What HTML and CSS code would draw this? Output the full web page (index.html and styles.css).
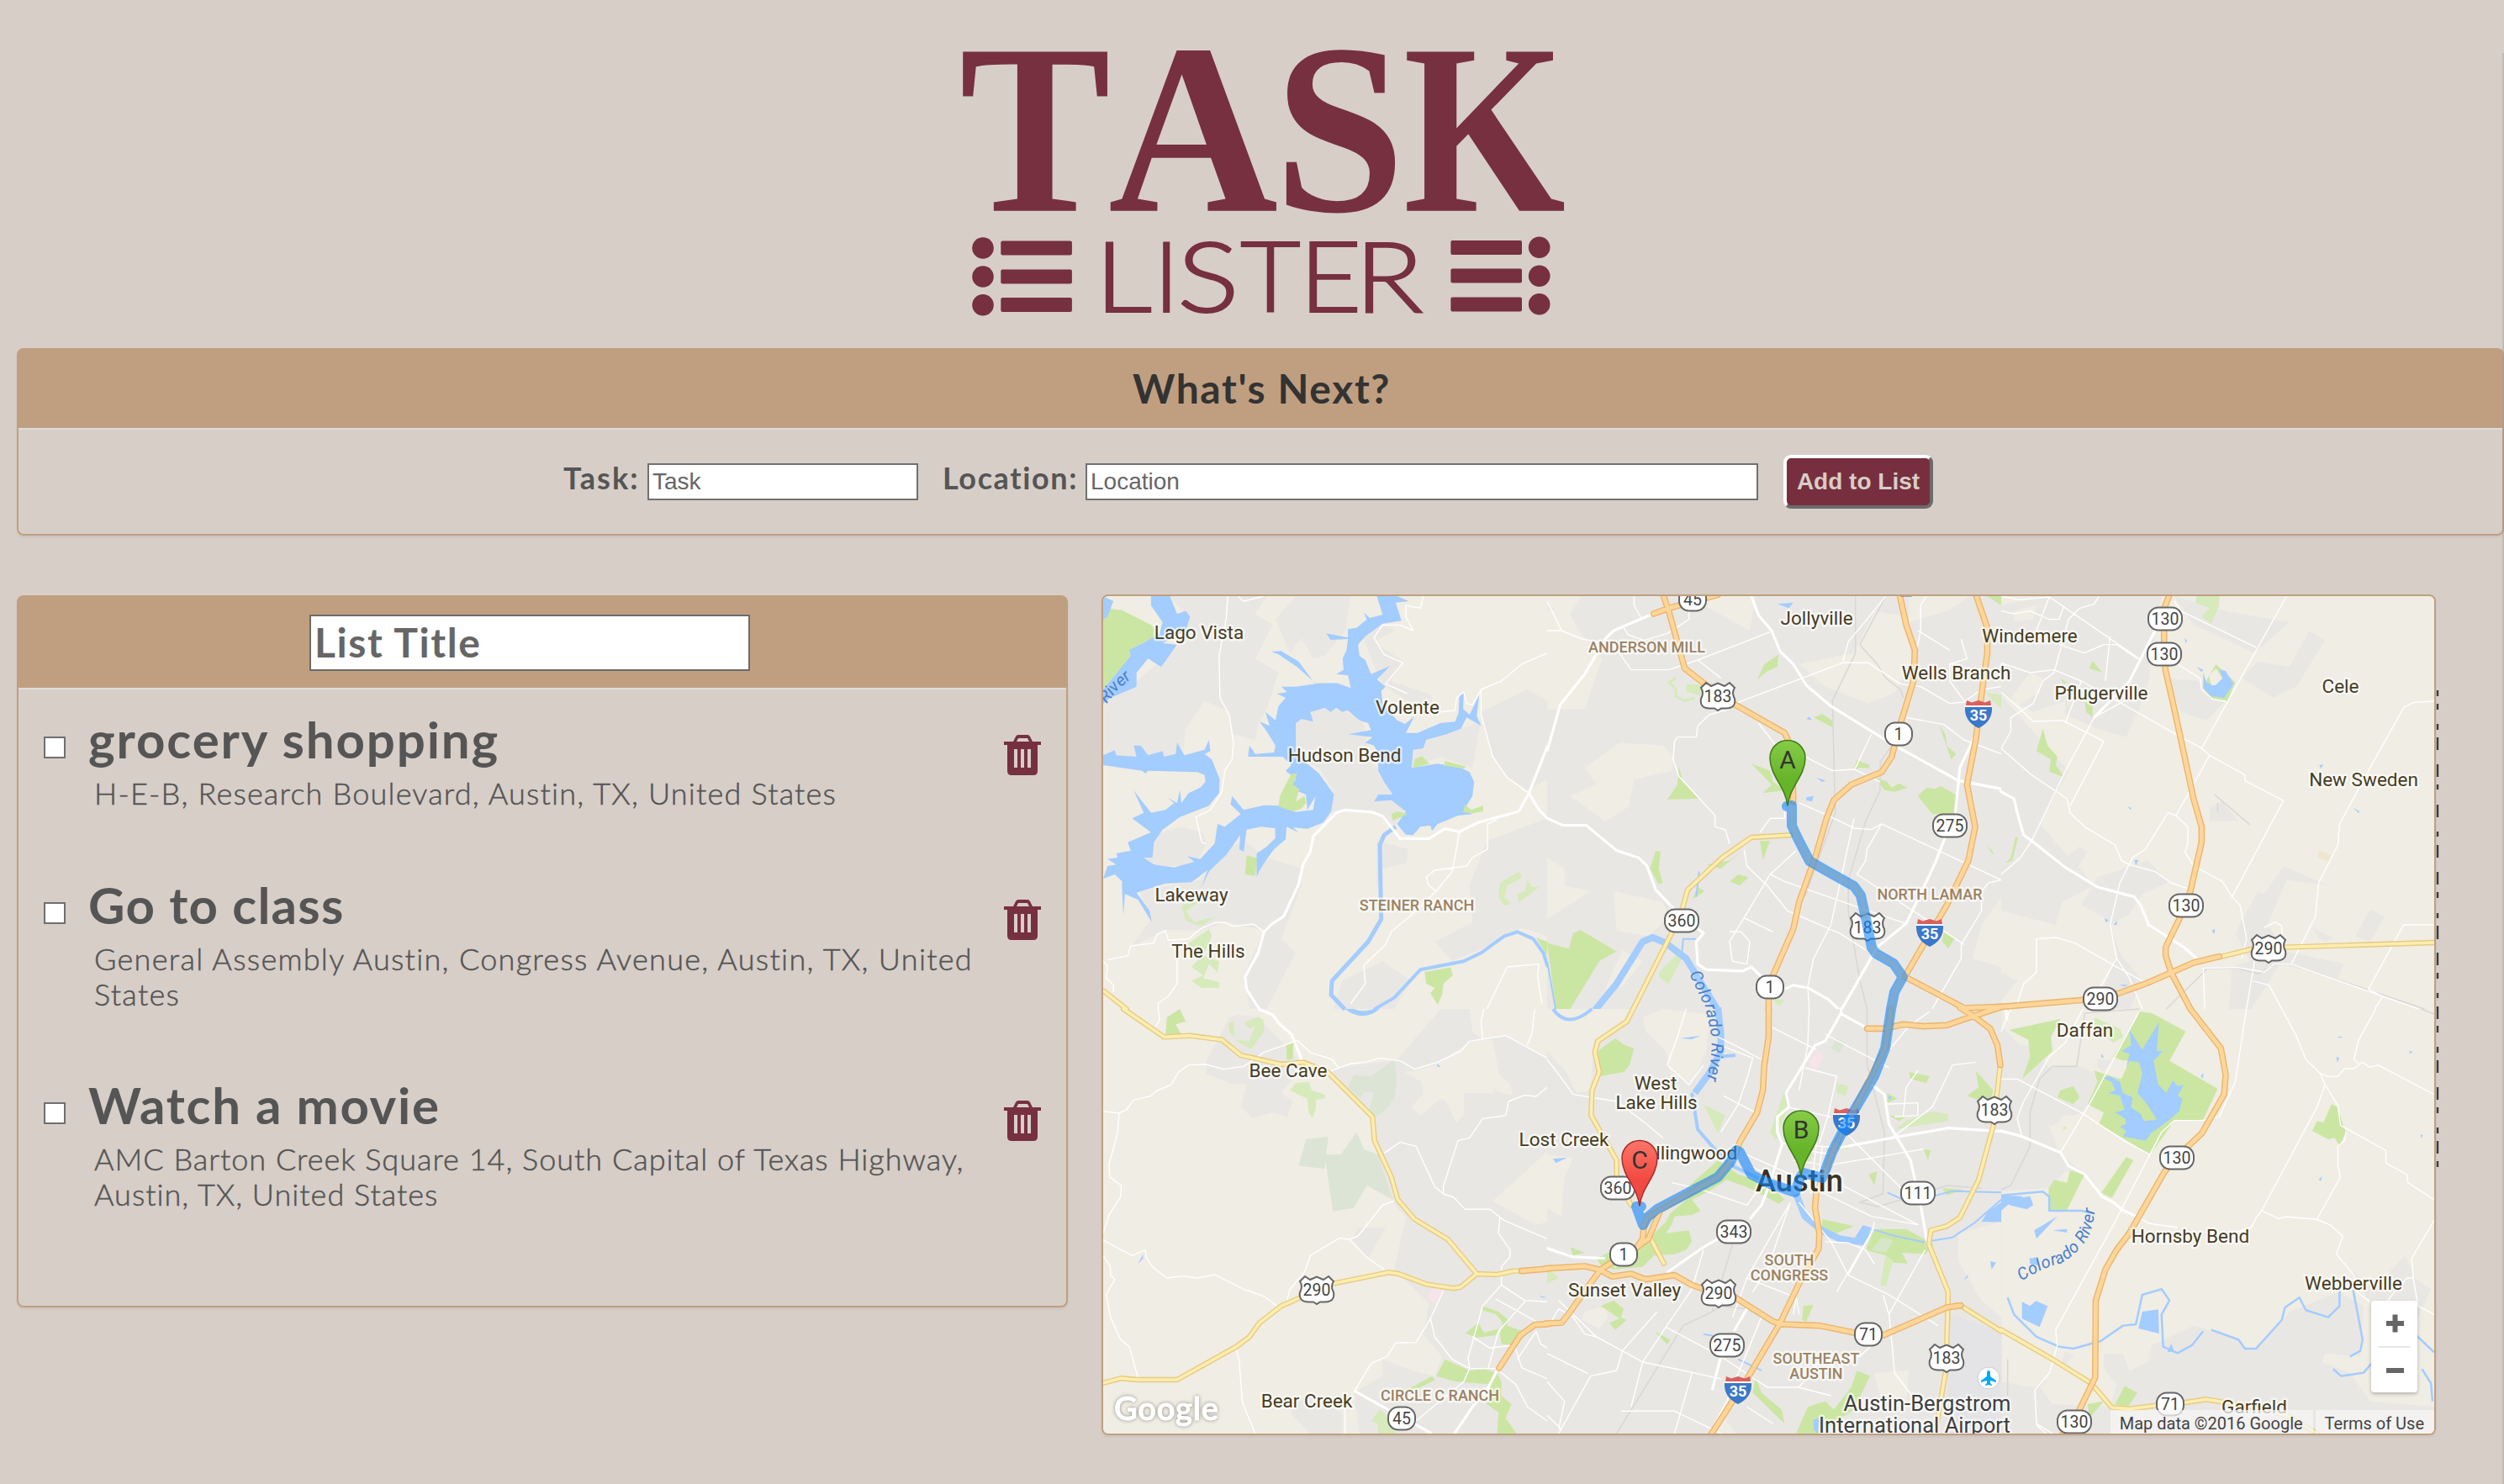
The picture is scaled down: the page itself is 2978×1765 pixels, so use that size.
FILE: index.html
```html
<!DOCTYPE html>
<html lang="en">
<head>
<meta charset="utf-8">
<title>Task Lister</title>
<link rel="stylesheet" href="styles.css">
</head>
<body>
<header class="brand">
  <svg class="logo" viewBox="1120 40 760 350" role="img" aria-label="Task Lister">
    <g class="logo-task">
      <text x="1141" y="250.7" textLength="180" lengthAdjust="spacingAndGlyphs">T</text>
      <text x="1318" y="250.7" textLength="202" lengthAdjust="spacingAndGlyphs">A</text>
      <text x="1515" y="250.7" textLength="156" lengthAdjust="spacingAndGlyphs">S</text>
      <text x="1669" y="250.7" textLength="193" lengthAdjust="spacingAndGlyphs">K</text>
    </g>
    <g class="logo-lister">
      <text transform="translate(1302 370.7) scale(1.15 1)">L</text>
      <text transform="translate(1372 370.7)">I</text>
      <text transform="translate(1400 370.7) scale(1.18 1)">S</text>
      <text transform="translate(1475 370.7) scale(1.06 1)">T</text>
      <text transform="translate(1545 370.7) scale(1.1 1)">E</text>
      <text transform="translate(1611 370.7) scale(1.15 1)">R</text>
    </g>
    <g fill="#76303f">
      <circle cx="1169" cy="295" r="12.8"/><circle cx="1169" cy="329" r="12.8"/><circle cx="1169" cy="362.7" r="12.8"/>
      <rect x="1190.3" y="286.6" width="84.6" height="17" rx="2"/><rect x="1190.3" y="320.4" width="84.6" height="17" rx="2"/><rect x="1190.3" y="354" width="84.6" height="17" rx="2"/>
      <rect x="1725.4" y="286" width="84.6" height="17" rx="2"/><rect x="1725.4" y="319.6" width="84.6" height="17" rx="2"/><rect x="1725.4" y="353.4" width="84.6" height="17" rx="2"/>
      <circle cx="1830.7" cy="294.3" r="12.8"/><circle cx="1830.7" cy="328.2" r="12.8"/><circle cx="1830.7" cy="361.7" r="12.8"/>
    </g>
  </svg>
</header>

<section class="panel entry">
  <div class="panel-head"><h2>What's Next?</h2></div>
  <form class="entry-form">
    <label class="lbl-task" for="task">Task:</label>
    <input class="field field-task" id="task" placeholder="Task">
    <label class="lbl-loc" for="loc">Location:</label>
    <input class="field field-loc" id="loc" placeholder="Location">
    <button class="add" type="button">Add to List</button>
  </form>
</section>

<main class="columns">
  <section class="panel list">
    <div class="panel-head list-head"><input class="list-title" placeholder="List Title"></div>
    <ul class="tasks">
      <li class="task">
        <input type="checkbox" class="check">
        <div><h3 class="t1">grocery shopping</h3><p class="a1">H-E-B, Research Boulevard, Austin, TX, United States</p></div>
        <svg class="trash" viewBox="0 0 44 48"><use href="#trash"/></svg>
      </li>
      <li class="task">
        <input type="checkbox" class="check">
        <div><h3 class="t2">Go to class</h3><p class="a2">General Assembly Austin, Congress Avenue, Austin, TX, United<br>States</p></div>
        <svg class="trash" viewBox="0 0 44 48"><use href="#trash"/></svg>
      </li>
      <li class="task">
        <input type="checkbox" class="check">
        <div><h3 class="t3">Watch a movie</h3><p class="a3">AMC Barton Creek Square 14, South Capital of Texas Highway,<br>Austin, TX, United States</p></div>
        <svg class="trash" viewBox="0 0 44 48"><use href="#trash"/></svg>
      </li>
    </ul>
  </section>

  <section class="panel map-panel">
    <svg class="map" viewBox="1312 709 1583 996">
      <defs>
        <g id="trash" fill="#76303f">
          <path fill-rule="evenodd" d="M0 8H11L14 2Q15 0 17 0H28Q30 0 31 2L34 8H44V12H40V43Q40 48 35 48H9Q4 48 4 43V12H0ZM15 8H30L28 4H17ZM12 17V39H16V17ZM20 17V39H24V17ZM28 17V39H32V17Z"/>
        </g>
        <linearGradient id="pg" x1="0" y1="0" x2="0" y2="1"><stop offset="0" stop-color="#86cc46"/><stop offset=".6" stop-color="#66b42a"/></linearGradient>
        <linearGradient id="pr" x1="0" y1="0" x2="0" y2="1"><stop offset="0" stop-color="#fd7567"/><stop offset=".6" stop-color="#f24a42"/></linearGradient>
        <path id="pin" d="M0 0C-2-22-21-36-21-57A21 21 0 0 1 21-57C21-36 2-22 0 0Z"/>
        <g id="us"><path d="M-14-16L-8-12L0-15.500L8-12L14-16L20-10Q16-4 20 3Q22 14 10 14.500L4 14.500L0 17L-4 14.500L-10 14.500Q-22 14 -20 3Q-16-4 -20-10Z"/></g>
        <g id="i35"><path fill="#d9605f" d="M-15-10L-14-16L-8-13.500L0-16L8-13.500L14-16L15-10Z"/><path fill="#fff" d="M-16-10H16V-7H-16Z"/><path fill="#3a78c9" d="M-16-8H16Q17 9 0 17Q-17 9-16-8Z"/><text class="i35t" y="8">35</text></g>
        <g id="tx2"><rect x="-16" y="-13.500" width="32" height="27" rx="12"/></g>
        <g id="tx3"><rect x="-20" y="-13.500" width="40" height="27" rx="12"/></g>

        <!-- yellow arterial highways -->
        <g id="yellow">
          <g transform="translate(1300 700) scale(.3444 .3333)"><path d="M35 1435L115 1500"/></g>
          <g transform="translate(1840 700) scale(.3444 .3333)"><path d="M840 880L705 888 605 960 485 1075 465 1150 425 1240 295 1505"/></g>
          <g transform="translate(2380 700) scale(.3814 .3333)"><path d="M680 1315L780 1287 885 1280 1355 1263"/></g>
          <g transform="translate(1300 1200) scale(.3444 .3333)"><path d="M105 0L245 100 335 95 445 110 510 165 650 198 725 190 810 225 965 385 972 470 1030 600 1052 680 1110 750 1225 822 1325 945 1395 948 1450 935 1475 935M35 1335L95 1318 155 1323 290 1323 495 1205 540 1170 575 1120 650 1060 715 1030 830 980 1020 940 1055 945 1150 982 1245 997 1270 992 1325 945"/></g>
          <g transform="translate(1840 1200) scale(.3444 .3333)"><path d="M300 -5L275 45 175 115 165 155 180 225 155 290 152 380 240 540 240 600 290 700M355 815L403 908M1565 200L1540 420 1490 610 1425 745 1380 775 1325 790 1318 840 1385 1010 1380 1200 1375 1300 1340 1515M1430 1060L1568 1150"/></g>
          <g transform="translate(2380 1200) scale(.3814 .3333)"><path d="M0 1145L160 1250 280 1335 345 1422 400 1427 485 1415 570 1405 640 1393 780 1420 890 1450 985 1515"/></g>
        </g>
        <!-- orange motorways -->
        <g id="orange">
          <g transform="translate(1840 700) scale(.3444 .3333)"><path d="M400 20L420 80 475 285 550 345 650 415 820 515 845 570 850 760M368 90L420 70 590 22M1217 20L1240 130 1270 220 1265 330 1215 500 1190 600 1155 655 1050 700 990 755 965 820 930 945 870 1120 850 1215 780 1380 765 1420 765 1505M1480 20L1520 140 1520 230 1500 380 1480 540 1450 700 1478 850 1455 970 1380 1130 1300 1270 1235 1385 1440 1497 1568 1492"/></g>
          <g transform="translate(2380 700) scale(.3814 .3333)"><path d="M526 20L508 70 508 190 512 290 540 430 600 750 625 850 625 905 590 1080 555 1180 513 1280 513 1310 530 1370 590 1500M-5 1493L255 1468 360 1447 450 1410 535 1368 600 1335 680 1313"/></g>
          <g transform="translate(1300 1200) scale(.3444 .3333)"><path d="M1480 935L1572 927M1572 1125L1525 1127 1475 1165 1402 1282"/></g>
          <g transform="translate(1840 1200) scale(.3444 .3333)"><path d="M-5 926L130 918 180 930 225 955 290 945 340 965 440 950 500 985 540 1000 650 1030 780 1115 810 1125 940 1130 1060 1155 1160 1165 1260 1120 1380 1065 1428 1058M-5 1122L50 1120 80 1080 145 985 185 930 215 910 310 850 330 820 335 770 345 745 590 600 650 520 665 475 725 370 745 290 750 200 765 100 765 -5M310 850L350 820 390 720M1187 0L1168 140 1040 400 985 510 955 600 930 650 925 710 940 800 938 855 870 980 805 1120 690 1320 565 1520M1105 70L1165 70 1230 55 1300 62 1380 58 1430 40 1572 -8M1425 -5L1465 20 1530 70 1555 130 1565 200"/></g>
          <g transform="translate(2380 1200) scale(.3814 .3333)"><path d="M590 0L685 140 700 235 695 305 625 445 545 530 510 580 440 720 400 800 360 860 325 930 295 1040 293 1315 240 1440 190 1520"/></g>
        </g>
        <path id="riv1" d="M2009 1158L2028 1198 2035 1230Q2038 1256 2026 1300"/>
        <path id="riv2" d="M2404 1524Q2428 1508 2452 1502 2476 1488 2486 1466 2491 1450 2493 1425"/>
        <path id="riv3" d="M1299 858L1330 820 1376 780"/>
      </defs>
      <rect x="1312" y="709" width="1583" height="996" fill="#f0ede4"/>

      <!-- north-west -->
      <g transform="translate(1300 700) scale(.3444 .3333)">
        <path class="urban" d="M260 27H600L560 90 620 130 560 250 640 300 600 430 570 480 560 540 480 520 470 440 385 400 320 500 310 600 35 600V380L150 330 300 200 320 90ZM700 27H890L870 150 800 240 760 250 720 175 680 230 630 110ZM700 430L820 425 930 460 960 620 1000 660 1080 790 1040 850 970 800 880 790 820 800 830 720 780 640 690 600ZM930 170L1000 130 1040 150 970 190 1070 260 1030 330 1170 380V420L1080 400 1000 340 980 300ZM1100 560L1300 490 1340 470 1310 640 1200 600 1100 640ZM1340 440L1500 360 1568 400V680L1500 720 1430 670 1380 600 1350 500ZM210 880L300 850 380 870 390 910 350 990 210 990 180 960ZM450 930L520 900 600 960 720 1000 720 1060 650 1250 700 1300 600 1500H540L520 1380 590 1220 460 1190 370 1220 250 1220 130 1280 200 1180 160 1080 370 1040ZM980 900L1090 930 1080 980 1000 1000 980 1060ZM1360 900L1568 820V1240L1480 1210 1400 1260 1240 1330 1180 1260 1310 1190 1300 1060ZM860 1400L1000 1330 1100 1400 1040 1500H830Z"/>
        <path class="park" d="M35 90L60 72 100 77 200 130 245 180 195 208 185 185 125 225 130 240 35 360ZM530 952L567 962 560 1025 525 1020ZM1145 1368L1235 1352 1242 1380 1210 1410 1205 1450 1190 1485 1165 1445 1180 1425 1150 1410ZM1530 1245L1568 1260V1310Z"/>
        <path class="park light" d="M1405 1050L1470 1010 1480 1020 1475 1035 1430 1060 1420 1100 1445 1125 1420 1132 1400 1100ZM1465 1090L1490 1080 1500 1038 1515 1065 1540 1065 1510 1090 1470 1120ZM340 1350L385 1300 325 1270 400 1215 410 1240 380 1310 435 1330 430 1370 400 1340 380 1390 435 1405 435 1425 375 1425 340 1400 380 1380ZM305 1130L380 1110 320 1150 350 1190 425 1170 370 1205 320 1185Z"/>
        <path class="water" d="M200 27H265L290 90 320 80 335 100 320 150 240 195 290 200 235 280 190 250 150 300 150 350 60 390 35 410V360L130 240 125 220 190 185 230 160 240 120 200 60ZM35 27L70 45 50 100 35 110Z"/>
        <path class="water" d="M980 27H1050L1090 45 1045 50 1065 115 1000 125 940 170 915 200 920 240 940 255 960 305 1025 277 980 325 1010 350 995 365 1000 410 1050 470 1078 483 1110 455 1080 515 1120 515 1200 480 1250 475 1262 445 1265 380 1280 370 1278 430 1300 450 1333 380 1325 455 1340 490 1290 460 1270 500 1220 520 1150 540 1140 570 1105 575 1100 640 1190 625 1270 640 1300 655 1316 690 1310 740 1280 790 1310 805 1260 810 1190 840 1170 865 1165 845 1130 850 1105 880 1080 878 1050 840 1080 795 1030 755 970 760 985 735 1035 735 1005 690 985 650 985 590 970 560 940 550 965 530 880 520 960 505 950 480 920 470 880 435 860 440 840 425 820 440 800 425 770 435 750 440 760 475 720 465 700 480V560L700 590 780 660 832 735 822 795 795 835 740 857 690 852 710 870 668 850 665 895 625 930 600 965 575 1005 565 1030V945L600 920 630 890 628 855 580 850 530 860 520 940 505 930 508 880 460 950 425 985 400 1010 373 1070 395 1005 340 1048 250 1052 150 1085 195 1150 203 1190 155 1110 110 1090 105 1165 100 1080V1045L75 1020 35 1035 50 990 80 985 50 965 85 960 80 945 130 935 120 905 200 870 135 820 175 800 140 720 200 800 250 790 280 765 255 745 290 765 300 720 305 765 330 730 370 710 388 690 385 665 360 655 190 650 180 660 170 650 35 630V595L75 577 80 595 150 600 140 560 165 560 190 595 240 580 245 600 285 590 290 550 315 595 385 575 400 540 405 580 385 590 410 610 437 680 435 730 400 775 300 815 240 860 210 905 205 960 175 960 210 985 280 995 350 975 325 955 370 965 420 910 430 840 455 850 510 805 475 770 480 740 520 790 590 773 650 775 700 797 760 790 768 740 740 790 735 735 700 720 685 700 700 680 665 650 685 630 655 600 535 600 540 560 560 590 625 585 630 560 600 510 575 475 610 490 595 440 630 470 640 420 665 390 635 375 670 370 650 350 700 350 770 340 705 280 640 235 615 225 650 223 710 260 765 338 840 337 890 355 880 310 840 305 865 290 862 250 875 220 880 180 820 183 805 160 880 175V145L910 140 945 110 935 85 955 105 1000 93Z"/>
        <path class="park" d="M685 660H705L690 700 712 715 700 760 730 740 735 765 720 785 690 795 640 778 645 740ZM1030 805L1050 795 1087 805 1035 828ZM1285 770L1305 790 1347 775V795L1310 802 1277 797ZM1105 640L1110 610 1135 598 1162 625ZM1215 615L1288 635 1280 642 1212 632Z"/>
        <path class="stream w5" d="M1045 850L1005 880 990 915 995 1180 950 1260 825 1400 822 1450 870 1502"/>
        <path class="stream w4" d="M970 1502L1040 1460 1130 1360 1280 1330 1340 1300 1420 1240 1465 1225 1520 1250 1555 1300 1570 1350"/>
        <path class="rd" d="M465 27L460 105 435 240 438 390 470 450 485 550 480 610 455 650 445 725 405 790 355 815 375 905 390 910M500 27L520 45 590 27M1568 230L1480 270 1410 330 1340 360 1310 415 1290 410 1280 370 1255 390 1250 435 1200 440M1340 360V450L1380 600 1430 675 1505 730M1140 27L1130 70 1080 60 1080 100 1105 150 1060 130 1000 130 970 175 1005 235 1070 265 1010 340 1085 375M35 1330L50 1345 45 1390 70 1415V1440M50 1325L120 1310 130 1275 210 1265 220 1235 250 1220 260 1255 330 1250 370 1215 420 1192 460 1192 480 1205 555 1197 590 1225M290 1270V1410L260 1455 225 1480V1500M1265 870L1240 1010 1185 1080 1110 1155 1030 1225 1010 1270 935 1345 940 1410 890 1480M1395 825L1362 840V930L1310 960 1290 990 1180 1005 1150 1030 1160 1060 1185 1080M1360 1500L1430 1350 1540 1340 1535 1380 1550 1480"/>
        <path class="rd big" d="M575 1502L530 1430 525 1385 570 1300 590 1225 620 1195 658 1170 710 1055 725 985 750 940 760 885 840 800 870 790 965 798 1000 812 1060 892H1160L1215 857 1265 868 1330 835 1470 795 1505 730 1570 560M1505 730L1540 790 1570 820"/>
      </g>

      <!-- north -->
      <g transform="translate(1840 700) scale(.3444 .3333)">
        <path class="urban" d="M0 27H1568V1500H0Z"/>
        <path class="land" d="M870 270L1060 230 1130 80 1240 100 1260 270 1200 370 1110 410 960 350ZM0 80L60 60 110 150 190 250 130 430 0 430ZM250 550L400 560 440 600 430 650 300 680 280 780 200 830 80 740 170 700 130 640ZM0 960L60 1000 60 1060 150 1080 0 1180ZM230 1080L400 1120 420 1170 350 1240 240 1220ZM480 27H720L700 150 560 70ZM260 1290L330 1330 260 1420 200 1430ZM1250 27H1460L1380 80 1250 120ZM1500 1200L1568 1100V1350L1470 1320ZM0 27H60L120 27 80 90 0 60Z"/>
        <path class="park" d="M0 1265L75 1285 90 1230 115 1218 240 1295 180 1330 80 1500H30ZM455 635L470 690 525 750 415 752 450 700ZM375 935L392 940 385 1000 400 1050 385 1055 355 1000ZM800 235L795 280 760 295 725 325 750 270ZM920 460L950 448 985 470V495ZM1070 612L1115 630 1110 640 1075 640 1055 655ZM1280 740L1310 710 1340 715 1360 705 1410 735 1405 805H1330ZM1135 675L1175 690 1190 710 1215 695 1245 710 1200 725 1165 720ZM705 625L770 650 780 690 820 720 745 730 775 700ZM735 900H770L745 970ZM550 985L630 970 680 930 600 1000ZM630 1045L660 1020 695 1030 665 1060ZM500 1110L520 1065 545 1080ZM1355 490L1375 520 1380 560 1412 590 1395 610ZM1370 1225L1410 1245 1385 1285 1365 1260ZM1520 27H1568V60ZM1515 910L1540 940V950Z"/>
        <path class="park light" d="M385 1370L465 1290 465 1320 420 1410 390 1390ZM480 340L540 345 530 380 480 370ZM1510 370L1568 380V430ZM770 1460L820 1470 800 1490Z"/>
        <path class="plight" d="M445 320L420 335 445 360 445 385 475 400 510 390"/>
        <path class="water" d="M795 55L850 50 835 70ZM895 745L920 740 915 760 895 755ZM895 465L905 457 915 470ZM930 675L962 685 950 690Z"/>
        <path class="stream w7" d="M165 1505L240 1410 300 1310 330 1260 365 1245 410 1265 480 1320 515 1380 590 1505"/>
        <path class="stream w2" d="M515 1250H470L465 1300M525 1010L515 1100M0 1330L30 1505"/>
        <path class="rail" d="M1065 27V230L985 400 990 600 995 800 890 1100M1170 27L1080 200 1140 270 1170 320 1220 360 1230 390M1190 560L1150 620V720L1100 830 1040 1040V1150L1080 1400 1105 1500"/>
        <path class="rd" d="M0 45L50 150 120 180 230 200 290 290H420L520 255 770 155M300 27V60L325 105M265 140L280 165 335 185 415 160 490 110V80M520 255L600 320M650 410L1020 265 1040 190 1170 27M1020 265H1110L1220 340 1290 350 1390 410 1440 405 1500 360 1568 350M630 430L560 450 520 490 515 530H450L440 545 435 610 455 670 580 810V850L615 860 630 910M730 480L790 560M890 600L985 650 1060 645 1150 690M735 870L770 820H820V780M870 765L960 805 1060 855 1120 860 1155 840 1568 1040M680 930L690 990 760 1060 830 1150 1010 1230 1100 1290M860 935L770 1020 680 1175 630 1260 640 1330 690 1340 700 1260 670 1225 630 1225M1120 520L1060 650M1280 150L1390 220M1310 27L1290 60V150L1275 220M1430 180L1450 250 1390 270V330L1440 400M1568 1040L1525 1050 1500 1080V1150L1430 1270V1320L1330 1500M1240 460L1370 485 1440 540 1568 590M1155 840L1105 930 1100 970 1070 1020 1190 1100 1440 1270M1060 820L980 1200 920 1320 900 1420 905 1500M680 1175L780 1225M770 1020L820 1045 1110 1150 1240 1195M0 150L50 150"/>
        <path class="rd big" d="M365 90L230 150 200 180 130 305 45 415 0 580M705 27L730 95 775 150 805 225 850 270 895 345 980 420 1200 560 1420 685 1570 715M0 820L55 845H135L240 935 315 960 345 990 375 1075 440 1145 540 1230 515 1260 520 1340 550 1360 675 1365 705 1350 740 1385M820 1430L850 1415 900 1425 970 1465 1010 1505M1480 520L1425 640 1410 800M1375 885L1340 980 1240 1195 1140 1280 1015 1505"/>
      </g>

      <!-- north-east -->
      <g transform="translate(2380 700) scale(.3814 .3333)">
        <path class="urban" d="M0 60L130 27H500L480 150 460 330 430 430 390 530 300 500 200 450V400L100 440 0 380ZM540 27L700 80 900 120 790 230 600 130ZM750 320L800 260 900 280 960 150 1010 185 920 350 895 360 850 390ZM520 320L620 330 700 400 640 470 560 440ZM0 380L170 600 210 650 120 840 290 1060 190 1120 170 1200 0 1150ZM200 960L245 920 270 940 230 1010ZM300 1030L460 970 520 1050 440 1090 400 1160 340 1200 370 1300 440 1400 400 1500H300L360 1300 330 1180 250 1130ZM800 1080L820 1090 880 990 1020 1060 890 1040 830 1200 870 1260 780 1340 730 1230ZM970 1210L1040 1250 1000 1260ZM720 1350L870 1290 1070 1340 1050 1390 870 1340 780 1500H710ZM1150 1145L1195 1170 1150 1260 1105 1240ZM650 780L690 760 740 830 650 830ZM0 1370L50 1400 0 1470Z"/>
        <path class="land" d="M90 300L130 320 120 370 50 420 30 390ZM40 80L110 60 100 110 40 120Z"/>
        <path class="park" d="M670 270L730 335 705 402 650 390 628 350ZM130 500L145 560 175 600 170 630 197 672 150 655 155 610 110 580ZM285 258L315 300 275 285ZM260 400L285 420V460L265 440ZM45 885L52 890 35 970 12 982 30 960ZM185 320L205 335 195 340Z"/>
        <path class="park light" d="M610 27H680V60L655 125 625 100 650 70 605 50Z"/>
        <path class="water" d="M630 300L640 335 665 345 690 320 680 288 700 295 725 340 695 390 655 385 630 355ZM610 280L630 290 625 298ZM992 630L1005 628 997 642ZM1098 782L1117 795 1115 802ZM415 968H428L420 988ZM394 777L406 783 403 790ZM322 1176L335 1183 326 1192ZM350 1200L362 1185 360 1200ZM656 1222L667 1214 665 1232ZM572 176L580 186 576 196ZM368 1413L395 1415 385 1421Z"/>
        <path class="land" d="M655 345L648 310 670 285 690 320 668 345Z"/>
        <path fill="#efe6cf" d="M990 932L1028 950 1020 975 987 960Z"/>
        <path class="rail" d="M665 735L775 842M640 1360L515 1500M625 1357L735 1354 800 1375 850 1342 905 1340 1320 1500M675 765V795"/>
        <path class="rd" d="M890 27L625 570 650 595 545 810 520 800 450 930 410 960 370 1050 340 1200 360 1320 400 1390 440 1500M540 45L560 80 795 210M550 270L620 320 625 360 660 395 700 402M650 595L760 665V685L880 757 720 1100M1350 402L1285 407 1255 425 1150 640 1055 840 1050 915 990 1050 980 1170 905 1340M0 570L95 665 205 750 215 800 260 850 355 915 375 970 400 985 480 1010 530 1050 580 1070M545 810L582 850V910L573 940 600 990 690 1045 720 1100 745 1130 765 1250 750 1320M360 400L545 520 625 570M305 27L290 55 245 70 210 110 165 300 130 330 100 410 30 460V510L0 570M0 80L40 90 90 80 150 110H180L195 65 150 30 60 40 0 27M195 65L430 250M150 30L110 150M180 200L260 230 320 200 360 200 425 250M340 170L325 330M385 400L290 460 205 640 95 900 60 960 0 1020M0 370L60 430 100 475 190 470 320 545 215 775M165 290L250 330 360 400M250 330L200 480M0 265L90 300 165 290M1350 1200H1255L1145 1430 1190 1455 1165 1500M625 1355L735 1352 820 1368 850 1340 905 1340 1190 1455 1300 1500M630 1355L635 1500M790 1330L765 1500M785 1400L835 1415 875 1500M50 1480L70 1410 110 1370V1250L170 1245 230 1265 360 1350 440 1400M360 1320L310 1420M820 1210L855 1190 875 1205V1240"/>
        <path class="rd big" d="M480 150L400 330 290 460M-5 722L40 750 50 800 70 880 95 900 200 995 300 1065 415 1100 435 1130 460 1200 570 1280 610 1320"/>
      </g>

      <!-- south-west -->
      <g transform="translate(1300 1200) scale(.3444 .3333)">
        <path class="urban" d="M390 190L470 30 500 20 570 30 720 190 690 250 650 300 690 330 670 385 620 370 550 390 510 350 530 270 470 265 390 230ZM820 215L1050 180 1150 60 1200 0H1568V1515H920L900 1370 1000 1310V1250L1100 1290 1180 1310 1205 1240 1140 1160 1160 1050 1040 930 1080 740 1040 700 990 560 960 380 870 290ZM680 1440L740 1370 860 1440V1515H750ZM920 780L1010 780 950 890 890 820Z"/>
        <path class="land" d="M1075 225L1110 220 1180 200 1300 120 1345 110 1380 110 1400 230 1380 300 1280 300 1280 380 1255 408 1220 330 1200 320 1130 380 1100 350 1140 300 1135 260ZM1380 685L1450 620 1568 510V760L1530 770ZM1300 0H1568V170L1430 95 1345 110 1310 80ZM1380 210L1440 270 1450 310 1390 290Z"/>
        <path fill="#dce5d5" d="M880 280L900 235 960 240 1040 180 1050 250 1040 320 1010 360 975 385 950 370 970 300 940 295 920 320ZM735 465L812 455 800 570 710 560ZM800 520H855L910 440 935 500 985 520 1000 570 1035 680 945 630 900 710 828 722Z"/>
        <path class="park" d="M250 90L255 30 300 0 320 45 285 55 305 90ZM668 130L692 120 690 180H668ZM1345 1060L1400 1080 1435 1110 1430 1130 1500 1155 1480 1180 1450 1200 1410 1195 1405 1160 1415 1120 1390 1090 1345 1075ZM1330 1120L1350 1155 1405 1140 1390 1165 1325 1172 1285 1158ZM1215 1250L1300 1290 1355 1285 1395 1300 1410 1330V1380L1445 1410 1425 1460 1462 1515H1395L1400 1440 1360 1410 1370 1340 1250 1330 1185 1310ZM1070 1360L1110 1345 1170 1310 1180 1325 1100 1365Z"/>
        <path class="park light" d="M700 265L745 260 755 290 800 305V318L768 325 770 350 758 390 745 370 740 320 680 290ZM990 1430L1020 1460 1050 1515H985V1480L960 1470ZM468 50L485 45 490 100 470 85ZM520 50L570 28 588 40 590 80 545 145 490 110 540 115 560 60 540 70Z"/>
        <path fill="#f5e4ea" d="M1170 1000H1210L1185 1050 1155 1035Z"/>
        <path class="water" d="M870 0Q930 50 990 0H970Q930 15 900 0ZM155 910L172 876 173 890ZM1187 205L1190 195 1200 208ZM1540 1022L1568 1030 1550 1030Z"/>
        <path class="rd" d="M35 365L90 372 115 360 140 325 200 310 215 295 270 270 295 225 330 200 390 198 450 215 520 205 590 155 705 112 750 155 825 180 850 212M90 372L85 440 55 555 58 600 98 630 95 670 55 735 35 800M35 825L135 880 180 860 185 890 205 920 255 960 310 953 360 960 420 948 520 1000 590 1025 635 1060M35 880L60 920 60 950 75 965 45 1020 60 1100 95 1180 125 1205 155 1315M495 1215L505 1260 515 1400 530 1440 560 1515M670 1040L680 1000 730 940 750 880 850 818 885 822 950 890 1005 930M885 822L915 810 1000 700 1040 685M1005 515L1060 475 1115 490 1180 635 1210 660 1245 672 1285 715H1370L1420 755 1568 820M1210 660V630L1245 520 1260 470 1300 460 1345 392 1425 380 1435 330 1490 308 1530 312 1568 280M810 225L890 195 940 190 990 175 1060 185 1110 215 1190 190 1270 150 1300 115 1425 95 1568 175M1350 0L1340 40 1345 110M1525 0L1515 90 1498 130M1405 740L1400 800 1440 860V885L1410 920V985L1490 1040 1568 1045M1410 985L1345 1060 1310 1190 1295 1245 1300 1283H1395M1390 1035L1530 1115M1210 1005L1165 1105 1180 1170 1240 1250 1300 1283M1165 1105L1115 1190 1045 1192 1015 1240 960 1265 905 1360M1495 1040L1400 1150 1365 1280M870 1400V1515M1300 1283L1280 1330 1115 1470M1400 1290L1460 1340 1500 1420 1568 1470M1455 1200L1480 1280 1568 1320M1310 1170L1370 1210 1450 1200M1530 1150L1465 1250M1530 1150L1545 1195 1568 1210M225 0L230 40 215 65"/>
        <path class="rd big" d="M570 0L620 20 645 55 685 90 722 185M900 1362L1010 1425 1170 1515M1395 1290L1365 1350 1310 1420 1245 1520"/>
      </g>

      <!-- south -->
      <g transform="translate(1840 1200) scale(.3444 .3333)">
        <path class="urban" d="M0 0H1570V1515H0Z"/>
        <path class="land" d="M0 0H290L260 50 160 110 150 290 100 300 70 230 0 150ZM330 30L400 0 560 20 550 150 500 260 430 240 410 150 340 80ZM0 520L90 530 60 600 50 740 0 710ZM130 1080L200 1060 210 1100 180 1140 120 1110ZM1420 800L1568 760V1100L1500 1040 1420 900ZM1130 1300L1250 1290 1240 1400 1150 1380ZM600 1440L650 1515H560Z"/>
        <path fill="#e4e3e5" d="M1390 1090L1570 1150V1515H1380Z"/>
        <path fill="#dce5d5" d="M1000 105L1030 120 1010 160 980 140Z"/>
        <path fill="#f5e4ea" d="M905 185L935 150 955 170 920 235Z"/>
        <path class="park" d="M235 105L270 130 300 140 285 200 265 225 185 240 175 150ZM590 540L660 590 760 620 820 680 800 695 700 640 620 610 560 650 500 680 530 720 500 735 440 740 430 770 410 800 490 790 500 830 480 860 440 875 370 880 330 920 230 930 320 850 370 800 410 760 425 730 470 690 520 640 480 640ZM1100 860L1130 785H1240L1335 840 1305 875 1225 870 1245 908 1195 905 1170 880ZM885 1060L920 1055 895 1115 880 1110ZM1070 1290L1115 1310 1060 1430 1000 1470 940 1515H860L900 1420 960 1400 990 1430 1050 1350ZM720 1310L740 1370 810 1430 820 1480 780 1440 710 1370ZM370 1150L425 1180 415 1197ZM185 1060L230 1040 265 1070 255 1100 275 1110 235 1145 215 1120 250 1105ZM80 850L130 870 90 880ZM170 890L230 860 235 930 190 920ZM1250 225L1320 240 1310 265 1255 250ZM1480 220L1540 290 1530 340 1450 310 1490 280ZM950 750L1060 775 1000 800 950 780ZM1300 500L1325 505 1315 540ZM1365 640L1440 645 1380 665ZM1110 590L1140 580 1130 630ZM1175 300L1210 320 1175 335ZM1180 380L1240 385 1215 400Z"/>
        <path class="park light" d="M540 340L615 380 590 445ZM820 290L835 350 800 430 790 470 770 440ZM1000 265L1040 275 1030 310 1000 300ZM0 920L40 960 0 980ZM1240 400L1330 365 1385 375V400L1200 430ZM980 500L1045 480 1040 500ZM1170 880L1195 900 1170 990 1150 985 1165 900ZM890 510L920 520 900 555Z"/>
        <path fill="#d6e6c8" d="M1155 815L1195 825 1170 870 1120 860Z"/>
        <path class="water" d="M1060 820L1090 772 1120 780 1100 845 1030 835ZM920 1465L940 1460 935 1515 920 1500ZM1500 760L1520 725 1568 690V760ZM1530 900L1550 905 1535 930ZM1440 965L1455 945 1450 960ZM20 535L70 530 30 550ZM460 105L530 95 500 108ZM1175 315L1190 310 1185 325Z"/>
        <path class="stream w7" d="M590 -5L600 90 600 150 560 230 510 300M860 660L890 740 950 790 1010 820 1070 830"/>
        <path class="stream w4" d="M20 0Q70 75 155 0M500 300L520 430 570 490 640 560 720 600 850 650M600 170L650 165"/>
        <path class="stream w2" d="M1120 785L1200 810 1300 832 1400 815 1480 760 1568 680M1175 655L1250 690 1400 650 1568 655M540 1160L590 1170M660 1250L740 1290"/>
        <path class="rail" d="M1105 0V200L1165 440 1160 660 1080 690 1140 705 1280 665 1380 630 1500 640M640 840L570 1080 470 1130 240 1515M570 1080L600 1060 690 1070 770 1120"/>
        <path class="rd" d="M0 180L30 220 90 305 240 330 330 400 400 460M415 200L450 100 480 0M415 200L490 270 540 200M600 130L710 175 690 250 660 340 600 440M610 310L720 370M590 100L650 130 740 180M775 65L930 145M905 0L900 130 870 290M890 210L1000 240 970 380 940 480M960 90L1180 210M830 350L980 385M815 480L1010 495M960 560L1300 500M965 600L1280 770 1120 740 940 650M430 620L520 640 690 700 760 600M840 690L760 930 710 1010M870 690L980 830 1040 950 1180 1020 1350 1130M1040 950L1120 800 1130 760M1305 860L1180 1090 1160 1020M960 830L1040 835 1100 860 1130 910M690 960L860 1030 870 1090M640 1100L690 960 840 690M0 850L90 885 170 890M540 860L500 1000 410 1135 330 1260 290 1420M0 1140L40 1070 90 1100 130 1160 170 1170 330 1260 470 1290 600 1320M0 1230L140 1300M40 1515L150 1310 240 1290 260 1220 380 1080M410 1135L600 1240 760 1350 870 1350 980 1380M255 1435H440L600 1515M690 1420L780 1480M740 1100L620 1400 560 1515M870 1350L940 1260 1080 1240 1150 1170M1180 1080L1200 1300 1290 1420M1170 340L1280 335V380L1200 385M1230 380L1240 280 1280 220M1190 460L1330 350 1400 200 1480 190M1100 250L1250 60 1320 10M1030 440L1280 700M0 1330L60 1400 40 1500M930 480L910 660M950 490L930 660M860 500L990 520M850 540L980 560M690 520L840 590M700 560L830 620M40 1040L170 1170M500 1300L440 1515M0 1450L50 1500M1000 1010L1090 850 1130 780M860 1030L850 1090"/>
        <path class="rd big" d="M1015 -5L1015 15 960 115 925 130 825 300 835 350 795 385V440L812 480 770 620 740 700 700 750M590 820L540 850 415 940M690 1070L645 1150M600 1240L570 1360M1010 15L1100 65M1120 270L1165 305 1180 410 1255 540 1290 700 1315 850M1010 495L1190 460 1385 425 1572 437M0 855L90 885 200 890"/>
      </g>

      <!-- south-east -->
      <g transform="translate(2380 1200) scale(.3814 .3333)">
        <path class="urban" d="M0 60L60 130 100 130 150 210 240 200 330 250 270 340 250 370 150 420 180 510 260 590 200 580 150 640 0 650ZM300 180L390 190 370 250 300 210ZM320 1230L380 1230 400 1290 460 1260 470 1200 600 1130 650 1145 740 1180 760 1212 800 1212 900 1080 1050 1010 1130 1060 1120 1240 1010 1230 1000 1260 1090 1300 1150 1400 1350 1420V1515H0V1330L100 1350 180 1300 200 1220 320 1300ZM1090 930L1160 1000 1260 880 1290 960 1340 1000 1300 1100 1150 1050Z"/>
        <path class="land" d="M190 380L250 380 200 450 165 440ZM180 1290L280 1180 330 1300 360 1340 340 1420 160 1410 120 1350Z"/>
        <path class="park" d="M430 10L470 15 575 80 525 185 675 285 630 395 540 398 465 520 305 410 320 370 270 340 300 260 290 220 370 250 390 190 350 170ZM25 75L185 35 155 100 160 150 65 250 90 170 85 110ZM185 290L225 275 245 315 225 340 175 315ZM390 528L412 540 345 675 313 655ZM165 610L205 620 215 577 260 590 205 718H148V640ZM1030 340L1050 350 1065 410 1075 440 1055 490 1040 460 1020 465 970 435 985 400 1005 405ZM385 1345L425 1370 395 1420 355 1410ZM270 1410L320 1400 275 1460Z"/>
        <path class="land" d="M350 180L400 185 375 250 320 225Z"/>
        <path class="park light" d="M290 30L370 70 380 100 350 120 290 70Z"/>
        <path class="park" d="M195 415L205 425 193 432Z" opacity=".5"/>
        <path class="water" d="M400 75L440 145 492 48 485 150 505 150 475 185 490 270 515 300 535 255 550 275 570 270 550 310 565 320 555 365 525 395 490 425 470 440 450 470 380 455 390 435 370 420 390 410 385 390 355 370 385 360 370 310 335 300 355 290 345 260 315 245 340 240 370 260 380 300 410 315 405 350 435 375 445 400 485 395 455 340 425 300 440 230 430 190 400 185 390 210 400 160 375 150 405 130ZM440 1080L490 1072 492 1158 428 1140ZM65 1045L90 1060 108 1042 145 1060 120 1135 65 1105ZM25 680L90 668 100 700 80 715 25 700ZM103 790L175 740 110 820ZM160 790L205 785V798ZM88 890L115 885V915L90 910ZM0 665L70 668 30 690 0 720ZM518 1225L530 1195 540 1222ZM1045 170L1054 175 1049 192ZM1272 150L1284 153 1275 160ZM1308 448L1315 450 1310 462ZM990 608L1001 597 997 614ZM622 240L630 228V248ZM312 160L320 170 313 176ZM1046 100L1060 98 1062 104Z"/>
        <path class="stream w3" d="M0 665L130 652 150 670V720H250L290 730M20 1030L40 1090 110 1170 180 1205 225 1212 310 1185 380 1130 420 1125 440 1020 500 1000 525 1040 500 1090 505 1205 550 1228 595 1200 630 1150M655 1145L740 1180 760 1212H795L875 1110 885 1065 930 1030 950 1075 1020 1100 1055 1060V1005M1097 1000L1127 1180 1120 1220 1088 1240M1035 1285L1060 1310 1130 1298 1155 1265M1312 1285L1340 1335 1345 1400M1295 1165L1350 1225"/>
        <path class="rail" d="M430 0L260 15 250 100 235 205 160 205 120 250 90 370V490L30 630 0 645M20 1250L20 1380M1310 0L1350 18"/>
        <path class="rd" d="M430 10L275 340 185 512M765 0L730 260 680 385 630 398H540L500 440 350 770 170 1145 175 1200 150 1300 105 1360 110 1480 160 1515M875 0L920 95 950 180 995 230 1020 242 1050 240 1070 213H1100L1125 190 1150 208 1175 200 1350 305M1168 0L1115 110 1100 180 1115 195M995 230L1010 270 985 350 812 720 865 748 890 742 980 750 1025 770 1065 810 1045 875 1100 950 1110 1010 1150 1045M1010 270L1050 345 1058 415 1200 505V550L1265 590 1268 620 1350 680M1075 440L1070 470 1050 490V560L1058 600 985 750M812 720L795 745 780 780 720 800 640 800M1350 755L1280 890 1285 960 1300 1060 1350 1090M1205 1040L1265 960H1285M0 250H50L250 370 390 475 465 520M255 0L200 120 150 170 70 330 50 390 65 455M420 740L460 765 550 780M30 0L0 80M110 1485L140 1515"/>
        <path class="rd big" d="M-5 434L65 455 185 512 210 560 260 590 315 670 350 690 375 715 420 740M15 0L18 40"/>
      </g>

      <use href="#yellow" class="yc"/><use href="#yellow" class="yf"/>
      <use href="#orange" class="oc"/><use href="#orange" class="of"/>

      <g class="town">
        <text x="1426" y="760">Lago Vista</text><text x="1674" y="849">Volente</text><text x="1599" y="906">Hudson Bend</text>
        <text x="1417" y="1072">Lakeway</text><text x="1437" y="1139">The Hills</text><text x="2160.600" y="743">Jollyville</text>
        <text x="2326.500" y="807.700">Wells Branch</text><text x="2414" y="764">Windemere</text><text x="2499" y="831.700">Pflugerville</text>
        <text x="2783.500" y="824">Cele</text><text x="2811" y="935">New Sweden</text><text x="1532" y="1280.700">Bee Cave</text>
        <text x="1860" y="1362.700">Lost Creek</text><text x="1969" y="1296">West</text><text x="1970" y="1319">Lake Hills</text>
        <text x="2004" y="1379">Collingwood</text><text x="1932" y="1542">Sunset Valley</text><text x="2479.500" y="1233">Daffan</text>
        <text x="2605" y="1477.700">Hornsby Bend</text><text x="2799" y="1534">Webberville</text><text x="2681" y="1681">Garfield</text>
        <text x="1554" y="1674">Bear Creek</text>
      </g>
      <g class="area">
        <text x="1685" y="1083">STEINER RANCH</text><text x="1958.500" y="776">ANDERSON MILL</text><text x="2295" y="1070">NORTH LAMAR</text>
        <text x="2128" y="1505">SOUTH</text><text x="2128" y="1523">CONGRESS</text><text x="2160" y="1622">SOUTHEAST</text><text x="2160" y="1640">AUSTIN</text>
        <text x="1712.600" y="1666">CIRCLE C RANCH</text>
      </g>
      <g class="airport"><text x="2292" y="1678">Austin-Bergstrom</text><text x="2277" y="1704">International Airport</text></g>
      <g class="river">
        <text textLength="132"><textPath href="#riv1">Colorado River</textPath></text>
        <text textLength="132"><textPath href="#riv2">Colorado River</textPath></text>
        <text><textPath href="#riv3">do River</textPath></text>
      </g>
      <text class="city" x="2140" y="1416.700" textLength="104" lengthAdjust="spacingAndGlyphs">Austin</text>

      <g class="shield">
        <use href="#tx2" x="2013" y="713"/><text x="2013" y="720">45</text>
        <use href="#tx2" x="2267" y="695"/>
        <use href="#tx2" x="2258" y="873"/><text x="2258" y="880">1</text>
        <use href="#tx3" x="2319" y="982"/><text x="2319" y="989">275</text>
        <use href="#tx3" x="2000" y="1095"/><text x="2000" y="1102">360</text>
        <use href="#tx2" x="2105" y="1174"/><text x="2105" y="1181">1</text>
        <use href="#tx3" x="2575" y="736"/><text x="2575" y="743">130</text>
        <use href="#tx3" x="2574" y="778"/><text x="2574" y="785">130</text>
        <use href="#tx3" x="2600" y="1077"/><text x="2600" y="1084">130</text>
        <use href="#tx3" x="2498" y="1188"/><text x="2498" y="1195">290</text>
        <use href="#tx3" x="2589" y="1377"/><text x="2589" y="1384">130</text>
        <use href="#tx2" x="2581" y="1670"/><text x="2581" y="1677">71</text>
        <use href="#tx3" x="2467" y="1691"/><text x="2467" y="1698">130</text>
        <use href="#tx2" x="1667" y="1687"/><text x="1667" y="1694">45</text>
        <use href="#tx3" x="1924" y="1413"/><text x="1924" y="1420">360</text>
        <use href="#tx2" x="1931" y="1492"/><text x="1931" y="1499">1</text>
        <use href="#tx3" x="2062" y="1465"/><text x="2062" y="1472">343</text>
        <use href="#tx3" x="2281" y="1419"/><text x="2281" y="1426">111</text>
        <use href="#tx2" x="2222" y="1587"/><text x="2222" y="1594">71</text>
        <use href="#tx3" x="2054" y="1600"/><text x="2054" y="1607">275</text>
        <use href="#us" x="2043" y="828"/><text x="2043" y="835">183</text>
        <use href="#us" x="2221" y="1102"/><text x="2221" y="1110">183</text>
        <use href="#us" x="2698" y="1128"/><text x="2698" y="1135">290</text>
        <use href="#us" x="1566" y="1534"/><text x="1566" y="1541">290</text>
        <use href="#us" x="2044" y="1538"/><text x="2044" y="1545">290</text>
        <use href="#us" x="2372" y="1320"/><text x="2372" y="1327">183</text>
        <use href="#us" x="2315" y="1615"/><text x="2315" y="1622">183</text>
      </g>
      <use href="#i35" x="2353" y="849"/><use href="#i35" x="2295" y="1109"/><use href="#i35" x="2196" y="1334"/><use href="#i35" x="2067" y="1653"/>

      <circle cx="2365" cy="1639" r="13" fill="#fff" stroke="#ccc" stroke-width="1"/>
      <path transform="translate(2365 1639)" fill="#03a9f4" d="M0-9Q2-9 2-6V-2L9 3V5L2 3V6L4 8V9L0 8L-4 9V8L-2 6V3L-9 5V3L-2-2V-6Q-2-9 0-9Z"/>

      <!-- driving route -->
      <g fill="none" stroke="#0f86ff" stroke-opacity=".6" stroke-linecap="round" stroke-linejoin="round">
        <path stroke-width="12" d="M2125 959L2131 958 2131 982 2138 997 2152 1024 2171 1035 2205 1054 2213 1065 2219 1092 2226 1127 2231 1134 2252 1146 2263 1162 2253 1180 2249 1200 2242 1247 2229 1280 2198 1333 2179 1370 2169 1397 2167 1401 2145 1395 2141 1400 2135 1418 2105 1408 2083 1397 2069 1370 2065 1368 2058 1382 2043 1400 1971 1438 1959 1448 1954 1457 1946 1435 1952 1435"/>
        <path stroke-width="7" stroke="#8fa8b4" stroke-opacity=".5" d="M2131 960L2131 982 2138 997 2152 1024 2171 1035 2205 1054 2213 1065 2219 1092M2226 1127L2231 1134 2252 1146 2263 1162 2253 1180 2249 1200 2242 1247 2229 1280 2202 1325M2183 1362L2169 1397M2057 1384L2043 1400 1971 1438 1959 1448 1954 1457"/>
      </g>

      <g class="pin">
        <use href="#pin" x="2126" y="958.500" fill="url(#pg)" stroke="#3f7a17"/><text x="2126" y="914">A</text>
        <use href="#pin" x="2142" y="1399" fill="url(#pg)" stroke="#3f7a17"/><text x="2142" y="1354">B</text>
        <use href="#pin" x="1950" y="1434.500" fill="url(#pr)" stroke="#a92b27"/><text x="1950" y="1389.500">C</text>
      </g>
      <text class="google" x="1325" y="1689" textLength="124">Google</text>
    </svg>
    <div class="zoomer">
      <svg viewBox="0 0 55 109"><path d="M18 27H39M28.500 16.500V37.500M18 83H39" stroke="#666" stroke-width="6"/><path d="M8.500 55H46.500" stroke="#e6e6e6" stroke-width="2"/></svg>
    </div>
    <div class="credits"><span>Map data ©2016 Google</span><span>Terms of Use</span></div>
  </section>
  <svg class="ticks" viewBox="0 0 4 572"><path stroke="#3b3b3b" stroke-width="2.400" d="M2 1V8M2 17V24M2 41V48M2 57V72M2 89V104M2 113V119M2 137V152M2 169V175M2 185V200M2 217V232M2 241V248M2 266V272M2 281V297M2 313V328M2 337V344M2 361V367M2 377V392M2 400V408M2 425V432M2 441V456M2 473V488M2 497V504M2 521V528M2 537V552M2 561V568"/></svg>
</main>
<div class="scroll-edge"></div>
</body>
</html>
```
FILE: styles.css
```css
* { box-sizing: border-box; }
body {
  margin: 0;
  width: 2978px;
  height: 1765px;
  overflow: hidden;
  background: #d7cec8;
  color: #555;
  font-family: Lato, "Open Sans", sans-serif;
}
h2, h3, p, ul { margin: 0; padding: 0; }

.brand { display: flex; padding: 40px 0 24px 1120px; }
.logo { width: 760px; height: 350px; fill: #76303f; overflow: visible; }
.logo-task text { font: bold 289px "Liberation Serif", serif; }
.logo-lister { font: 300 117px Lato, sans-serif; stroke: #76303f; stroke-width: 2px; }

.panel {
  border: 2px solid #c09f80;
  border-radius: 8px;
  box-shadow: 0 2px 3px rgba(0, 0, 0, .06);
}
.panel-head {
  display: flex;
  align-items: center;
  justify-content: center;
  background: #c09f80;
  border-bottom: 2px solid #ddd;
}

.entry { margin-left: 20px; height: 223px; }
.entry .panel-head { height: 95px; }
.entry h2 { color: #333; font-size: 48px; font-weight: 700; letter-spacing: 1.6px; line-height: 60px; padding: 0 0 2px 3px; }
.entry-form { display: flex; align-items: center; height: 124px; padding-left: 648px; white-space: nowrap; }
.entry-form label { font-size: 36px; font-weight: 700; line-height: 42px; padding-bottom: 10px; }
.lbl-task { width: 100px; letter-spacing: 2.1px; }
.lbl-loc { width: 170px; margin-left: 29px; letter-spacing: 1.6px; }
.field {
  height: 44px;
  padding: 0 4px;
  border: 2px solid #707070;
  border-radius: 0;
  background: #fff;
  font: 28px "Liberation Sans", Arial, sans-serif;
}
.field-task { width: 322px; }
.field-loc { width: 800px; }
.field::placeholder, .list-title::placeholder { color: #666; opacity: 1; }
.add {
  width: 178px;
  height: 64px;
  margin-left: 30px;
  padding: 0;
  border: 4px solid;
  border-color: #fff #6b6b6b #6b6b6b #fff;
  border-radius: 9px;
  background: #772f3f;
  color: #d7cec8;
  font: bold 28px "Liberation Sans", Arial, sans-serif;
}

.columns { display: flex; align-items: flex-start; margin: 70px 0 0 20px; }
.list { width: 1250px; height: 847px; margin-top: 1px; }
.list-head { height: 110px; padding-right: 30px; }
.list-title {
  width: 524px;
  height: 67px;
  padding: 0 4px 2px;
  border: 2px solid #6b6b6b;
  background: #fff;
  font: bold 48px Lato, sans-serif;
  letter-spacing: 1.6px;
}
.tasks { list-style: none; padding: 26px 30px 0; }
.task { display: grid; grid-template-columns: 55px 1fr 44px; margin-bottom: 77.5px; }
.check {
  appearance: none;
  width: 26px;
  height: 26px;
  margin: 30px 0 0;
  border: 2px solid #6f6f6f;
  background: #fff;
}
.task h3 { margin-left: -2px; font-size: 60px; font-weight: 700; line-height: 66px; white-space: nowrap; }
.task p { margin: 10px 0 1px 5px; font-size: 36px; line-height: 42px; font-weight: 300; white-space: nowrap; -webkit-text-stroke: .5px #555; }
.t1 { letter-spacing: 1.9px; }
.t2 { letter-spacing: 1.3px; }
.t3 { letter-spacing: 1.7px; }
.a1 { letter-spacing: 1.2px; }
.a2 { letter-spacing: 1.3px; }
.a3 { letter-spacing: 1px; }
.trash { width: 44px; height: 48px; margin-top: 27.5px; }

.map-panel { position: relative; width: 1587px; height: 1000px; margin-left: 40px; overflow: hidden; }
.map { display: block; width: 1583px; height: 996px; font-family: Roboto, sans-serif; }
.map path { vector-effect: non-scaling-stroke; }
.urban { fill: #e9e7e4; }
.land { fill: #f0ede4; }
.park { fill: #cbe6a3; }
.light { fill: #d6eabb; }
.plight { fill: none; stroke: #d6eabb; stroke-width: 3px; }
.water { fill: #a3ccff; }
.stream, .rd, .rail { fill: none; stroke-linejoin: round; }
.stream { stroke: #a3ccff; }
.w2 { stroke-width: 2px; }
.w3 { stroke-width: 2.5px; }
.w4 { stroke-width: 4px; }
.w5 { stroke-width: 5px; }
.w7 { stroke-width: 8px; }
.rail { stroke: #d8d7d6; stroke-width: 1.5px; }
.rd { stroke: #fff; stroke-width: 1.4px; }
.big { stroke-width: 3.2px; }
.yc, .yf, .oc, .of { fill: none; stroke-linejoin: round; stroke-linecap: round; }
.yc { stroke: #e6cb80; stroke-width: 6.4px; }
.yf { stroke: #ffedb0; stroke-width: 3.6px; }
.oc { stroke: #ebb56d; stroke-width: 7.6px; }
.of { stroke: #ffd699; stroke-width: 4.8px; }

.town, .area, .city, .airport { text-anchor: middle; paint-order: stroke; stroke: rgba(255, 255, 255, .65); stroke-width: 5px; stroke-linejoin: round; }
.town { font-size: 22.5px; fill: #463c22; }
.area { font-size: 18px; font-weight: 500; fill: #9b8262; }
.city { font-size: 36px; font-weight: 500; fill: #3a3220; }
.airport { font-size: 25.6px; fill: #3f3f3f; }
.river { font-size: 20px; font-style: italic; fill: #4a7fcb; }
.shield { fill: #fff; stroke: #666; stroke-width: 2px; }
.shield text { fill: #444; stroke: none; font-size: 19.5px; text-anchor: middle; }
.i35t { fill: #fff; font-size: 18px; font-weight: 700; text-anchor: middle; }
.pin { stroke-width: 1.5px; }
.pin text { fill: #333; font-size: 30px; text-anchor: middle; }
.google { font: 600 38px Lato, sans-serif; fill: #fff; stroke: #fff; filter: drop-shadow(0 0 2px rgba(0, 0, 0, .4)); }

.zoomer {
  position: absolute;
  right: 20px;
  bottom: 49px;
  width: 55px;
  height: 109px;
  border-radius: 4px;
  background: #fff;
  box-shadow: 0 2px 4px rgba(0, 0, 0, .25);
}
.zoomer svg { display: block; width: 55px; height: 109px; }
.credits {
  position: absolute;
  right: 0;
  bottom: 0;
  display: flex;
  gap: 3px;
  height: 28px;
  color: #444;
  font: 20px/32px Roboto, sans-serif;
  white-space: nowrap;
}
.credits span { padding: 0 12px 0 11px; background: rgba(245, 245, 245, .75); }

.ticks { width: 4px; height: 572px; margin: 113px 0 0; }
.scroll-edge { position: absolute; top: 63px; right: 0; width: 2px; height: 1702px; background: rgba(150, 150, 150, .35); }
```
